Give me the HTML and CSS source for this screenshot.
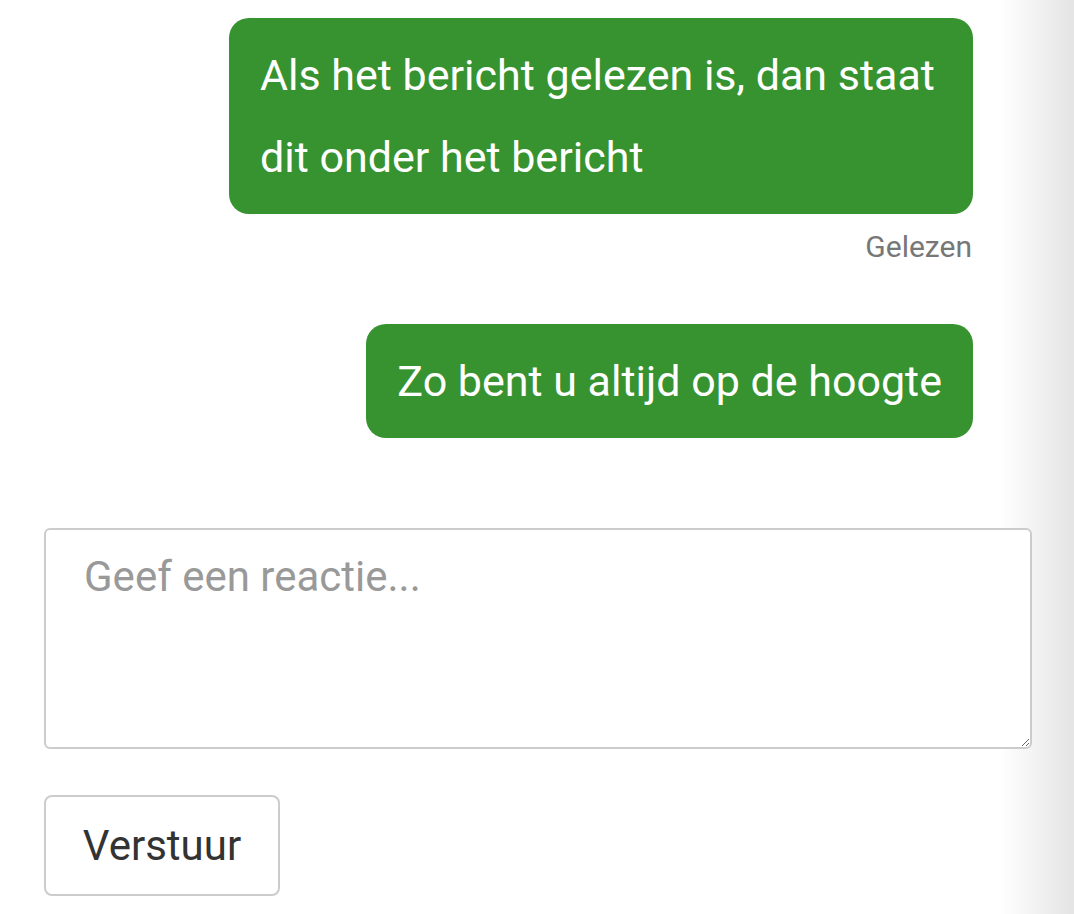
FILE: index.html
```html
<!DOCTYPE html>
<html lang="nl">
  <head>
    <meta charset="UTF-8" />
    <meta name="viewport" content="width=device-width, initial-scale=1.0" />
    <title>Berichten</title>
    <link rel="stylesheet" href="styles.css">
  </head>
  <body>
    <main class="chat">
      <div class="messages">
        <div class="message">
          <div class="bubble">Als het bericht gelezen is, dan staat dit onder het bericht</div>
          <div class="status">Gelezen</div>
        </div>
        <div class="message">
          <div class="bubble">Zo bent u altijd op de hoogte</div>
        </div>
      </div>

      <form id="replyForm" class="reply">
        <textarea id="reply" name="reply" placeholder="Geef een reactie..."></textarea>
        <button type="submit">Verstuur</button>
      </form>
    </main>
  </body>
</html>
```

FILE: styles.css
```css
body {
  margin: 0;
  font-family: Roboto, "Liberation Sans", sans-serif;
  background: linear-gradient(to right, #fff 1000px, #e4e4e4 1074px);
  min-height: 914px;
}
.chat {
  padding: 18px 42px 0 44px;
}
.messages {
  display: flex;
  flex-direction: column;
  align-items: flex-end;
  padding-right: 59px;
}
.message {
  display: flex;
  flex-direction: column;
  align-items: flex-end;
  max-width: 744px;
  margin-bottom: 26px;
}
.bubble {
  background-color: #379230;
  color: #fff;
  font-size: 43px;
  line-height: 82px;
  padding: 16px 31px;
  border-radius: 20px;
}
.status {
  margin-top: 15px;
  font-size: 30px;
  line-height: 36px;
  color: #777;
  padding-right: 1px;
  margin-bottom: 33px;
}
.reply {
  margin-top: 64px;
}
textarea {
  display: block;
  box-sizing: border-box;
  width: 100%;
  height: 221px;
  padding: 22px 38px;
  border: 2px solid #ccc;
  border-radius: 6px;
  font-family: inherit;
  font-size: 42px;
  line-height: 1.2;
  color: #333;
  margin-bottom: 46px;
}
textarea::placeholder {
  color: #999;
}
button {
  box-sizing: border-box;
  width: 236px;
  height: 101px;
  padding: 0;
  background-color: #fff;
  border: 2px solid #ccc;
  border-radius: 8px;
  font-family: inherit;
  font-size: 42px;
  color: #333;
  cursor: pointer;
}
button:hover {
  background-color: #f5f5f5;
}
```
